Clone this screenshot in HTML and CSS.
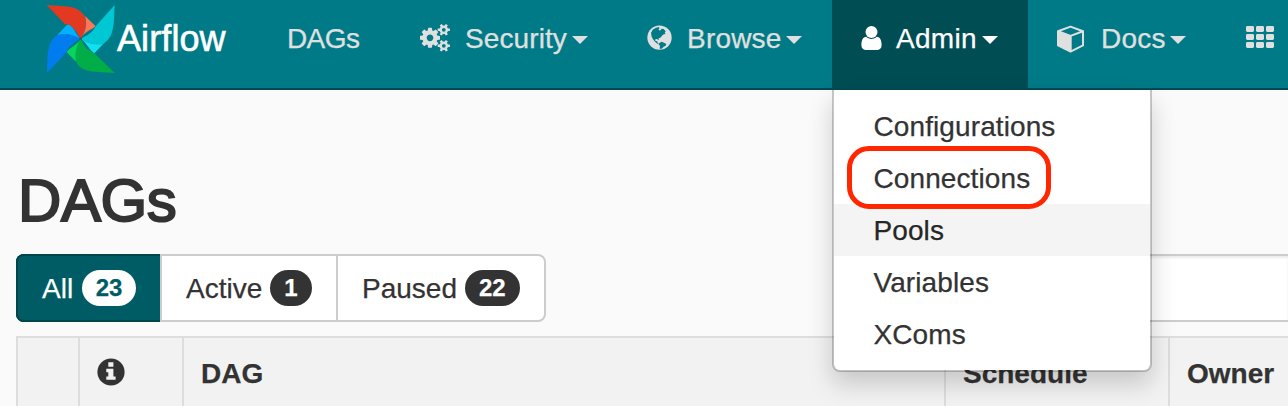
FILE: index.html
```html
<!DOCTYPE html>
<html lang="en">
<head>
<meta charset="utf-8">
<title>Airflow - DAGs</title>
<link rel="stylesheet" href="styles.css">
</head>
<body>
<header class="navbar">
  <a class="brand">
    <svg class="logo" width="80" height="80" viewBox="0 0 240 240">
      <path fill="#e43921" d="M20 15 C50 18 80 17 101 23 C117 28 129 38 135 50 C142 75 133 98 122 116 C112 101 104 83 86 74 L75 73 Z"/>
      <path fill="#ff7557" d="M135 48 L167 79 C155 90 134 94 122 116 C135 98 143 75 135 48 Z"/>
      <path fill="#00c7d4" d="M224 15 C222 45 223 74 216 97 C211 114 201 124 190 131 C165 137 141 129 122 116 C140 108 158 98 167 79 Z"/>
      <path fill="#11e1ee" d="M190 131 L163 160 C149 151 142 130 122 116 C141 129 165 137 190 131 Z"/>
      <path fill="#00ad46" d="M224 219 C192 216 162 218 136 210 C121 204 112 195 109 185 C103 160 110 138 122 116 C129 135 142 151 163 160 Z"/>
      <path fill="#04d659" d="M109 186 L80 156 C90 141 110 137 122 116 C110 138 103 160 109 186 Z"/>
      <path fill="#017cee" d="M21 219 C23 187 20 160 29 135 C35 118 43 109 54 104 C78 97 102 105 122 116 C105 124 87 136 80 156 Z"/>
      <path fill="#00b2ff" d="M52 105 L80 76 Q87 72 93 79 C104 87 107 105 122 116 C102 105 78 97 52 105 Z"/>
      <circle cx="122" cy="116" r="4" fill="#51504f"/>
    </svg>
    <span>Airflow</span>
  </a>
  <ul class="nav">
    <li class="item dags">DAGs</li>
    <li class="item security">
      <svg class="icon" width="30" height="30" viewBox="0 0 30 30">
        <path transform="translate(0 3.8) scale(.01302) translate(0 -128)" d="M1024 896q0-106-75-181t-181-75-181 75-75 181 75 181 181 75 181-75 75-181zm512-109v222q0 12-8 23t-20 13l-185 28q-19 54-39 91 35 50 107 138 10 12 10 25t-9 23q-27 37-99 108t-94 71q-12 0-26-9l-138-108q-44 23-91 38-16 136-29 186-7 28-36 28h-222q-14 0-24.5-8.5t-11.5-21.5l-28-184q-49-16-90-37l-141 107q-10 9-25 9-14 0-25-11-126-114-165-168-7-10-7-23 0-12 8-23 15-21 51-66.5t54-70.5q-27-50-41-99l-183-27q-13-2-21-12.5t-8-23.5v-222q0-12 8-23t19-13l186-28q14-46 39-92-40-57-107-138-10-12-10-24 0-10 9-23 26-36 98.5-107.5t94.5-71.5q13 0 26 10l138 107q44-23 91-38 16-136 29-186 7-28 36-28h222q14 0 24.5 8.5t11.5 21.5l28 184q49 16 90 37l142-107q9-9 24-9 13 0 25 10 129 119 165 170 7 8 7 22 0 12-8 23-15 21-51 66.5t-54 70.5q26 50 41 98l183 28q13 2 21 12.5t8 23.5z"/>
        <g fill="none" stroke="currentColor">
          <circle cx="23.8" cy="5.8" r="3.1" stroke-width="2.4"/>
          <path stroke-width="2.5" d="M27.4 5.8H29.9M20.2 5.8H17.7M25.6 2.7 26.8 .6M22 2.7 20.8 .6M25.6 8.9 26.8 11M22 8.9 20.8 11"/>
          <circle cx="23.8" cy="21.8" r="3.1" stroke-width="2.4"/>
          <path stroke-width="2.5" d="M27.4 21.8H29.9M20.2 21.8H17.7M25.6 18.7 26.8 16.6M22 18.7 20.8 16.6M25.6 24.9 26.8 27M22 24.9 20.8 27"/>
        </g>
      </svg>
      <span>Security</span><i class="caret"></i>
    </li>
    <li class="item browse">
      <svg class="icon" width="25" height="26" viewBox="0 0 75 78">
        <circle cx="37.5" cy="38" r="36.5"/>
        <path class="cut" d="M17 14 Q25 8 35 6 L38 10 L34 13 L39 17 L44 11 L50 12 L56 19 L53 23 L56 27 L50 28 L45 32 L40 38 L35 40 L35 46 L30 42 L25 43 L25 48 L31 49 L32 54 L37 56 L31 56 L24 50 L18 43 L14 35 L12 24 Z"/>
        <path class="cut" d="M37 54 L44 50 L51 53 L58 57 L56 62 L50 65 L44 71 L38 71 L39 63 L35 58 Z"/>
      </svg>
      <span>Browse</span><i class="caret"></i>
    </li>
    <li class="item admin">
      <svg class="icon" width="21" height="26" viewBox="0 0 21 26">
        <path d="M5.2 11.8C6.6 13.2 8.5 13.9 10.5 13.9S14.4 13.2 15.8 11.8C19.2 11.9 20.6 15.8 20.6 20.3C20.6 23 18.9 25 16.6 25H4.4C2.1 25 .4 23 .4 20.3C.4 15.8 1.8 11.9 5.2 11.8Z"/>
        <circle cx="10.5" cy="7" r="6"/>
      </svg>
      <span>Admin</span><i class="caret"></i>
      <div class="menu">
        <a>Configurations</a>
        <a class="marked">Connections</a>
        <a class="hovered">Pools</a>
        <a>Variables</a>
        <a>XComs</a>
      </div>
    </li>
    <li class="item docs">
      <svg class="icon" width="27" height="28" viewBox="0 0 27 28">
        <path d="M1 6.5 13.5 11V26.5L1 20.5Z"/>
        <path fill="none" stroke="currentColor" stroke-width="2" stroke-linejoin="round" d="M13.5 1.6 26 6.2V20.4L13.5 26.6 1 20.4V6.2ZM1 6.2 13.5 10.9 26 6.2M13.7 10.9V26.4"/>
      </svg>
      <span>Docs</span><i class="caret"></i>
    </li>
    <li class="item apps">
      <svg class="icon" width="28" height="22" viewBox="0 0 28 22">
        <g>
          <rect width="8" height="6" rx="1.4"/><rect x="10" width="8" height="6" rx="1.4"/><rect x="20" width="8" height="6" rx="1.4"/>
          <rect y="8" width="8" height="6" rx="1.4"/><rect x="10" y="8" width="8" height="6" rx="1.4"/><rect x="20" y="8" width="8" height="6" rx="1.4"/>
          <rect y="16" width="8" height="6" rx="1.4"/><rect x="10" y="16" width="8" height="6" rx="1.4"/><rect x="20" y="16" width="8" height="6" rx="1.4"/>
        </g>
      </svg>
    </li>
  </ul>
</header>
<main class="page">
  <h2 class="title">DAGs</h2>
  <div class="toolbar">
    <div class="filters">
      <a class="filter all"><span>All</span><span class="badge">23</span></a>
      <a class="filter active"><span>Active</span><span class="badge">1</span></a>
      <a class="filter paused"><span>Paused</span><span class="badge">22</span></a>
    </div>
    <div class="search"></div>
  </div>
  <div class="table">
    <div class="cell"></div>
    <div class="cell">
      <svg class="info" width="28" height="28" viewBox="0 0 28 28">
        <circle cx="14" cy="14" r="13.6"/>
        <path d="M11.3 4.2H16.4V8.8H11.3ZM9.3 10.8H16.4V18.4H18.6V21.8H9.3V18.4H11.3V14.2H9.3Z"/>
      </svg>
    </div>
    <div class="cell">DAG</div>
    <div class="cell">Schedule</div>
    <div class="cell">Owner</div>
  </div>
</main>
</body>
</html>
```
FILE: styles.css
```css
*, *::after { box-sizing: border-box; }
html, body { height: 406px; overflow: hidden; }
body {
  margin: 0;
  background: #fafafa;
  color: #333;
  font: 28px/40px "Liberation Sans", Arial, sans-serif;
  -webkit-text-stroke: .25px currentColor;
}
.navbar {
  display: flex;
  height: 90px;
  background: #007a87;
  border-bottom: 2px solid #004a52;
  color: #e0e0e0;
}
.brand {
  display: flex;
  width: 257px;
  padding-left: 40px;
  color: #fff;
  font-size: 36px;
}
.brand span { margin-left: -3px; padding-top: 19px; letter-spacing: .1px; -webkit-text-stroke: .6px #fff; }
.nav { display: flex; margin: 0; padding: 0; list-style: none; }
.item {
  position: relative;
  display: flex;
  flex: none;
  height: 88px;
  padding: 19px 0 0 30px;
  white-space: nowrap;
}
.icon { flex: none; fill: currentColor; margin-top: 6px; }
.cut { fill: #007a87; }
.caret {
  width: 0;
  height: 0;
  margin: 17px 0 0 6px;
  border: 8px solid transparent;
  border-top-color: currentColor;
  border-bottom: 0;
}
.dags { width: 133px; letter-spacing: -.6px; }
.security { width: 227px; }
.security .icon { margin-top: 5px; }
.security span { margin-left: 15px; letter-spacing: .1px; }
.security .caret { margin-left: 5px; }
.browse { width: 215px; }
.browse span { margin-left: 15px; letter-spacing: .2px; }
.browse .caret { margin-left: 4px; }
.admin { width: 196px; padding-left: 29px; background: #004d54; color: #fff; }
.admin > span { margin-left: 14px; letter-spacing: .3px; }
.admin > .caret { margin-left: 5px; }
.docs { width: 188px; padding-left: 29px; }
.docs span { margin-left: 17px; letter-spacing: .2px; }
.docs .caret { margin-left: 4px; }
.apps { width: 72px; }
.apps .icon { margin-top: 7px; }
.menu {
  position: absolute;
  z-index: 2;
  top: 90px;
  left: 0;
  width: 320px;
  height: 282px;
  padding-top: 10px;
  background: #fff;
  background-clip: padding-box;
  border: 2px solid rgba(0, 0, 0, .2);
  border-top: 0;
  border-radius: 0 0 8px 8px;
  box-shadow: 0 12px 24px rgba(0, 0, 0, .175);
  color: #333;
}
.menu a { display: block; height: 52px; padding: 7px 0 0 39.5px; position: relative; letter-spacing: .1px; }
.menu .hovered { background: #f4f4f4; color: #262626; }
.menu .marked { z-index: 1; }
.marked::after {
  content: "";
  position: absolute;
  left: 13px;
  top: -6px;
  width: 204px;
  height: 63px;
  border: 5px solid #ff2600;
  border-radius: 22px;
}
.page { padding: 0 0 0 16px; }
.title {
  height: 164px;
  margin: 0;
  padding: 78px 0 0 2px;
  font-size: 60px;
  font-weight: 400;
  line-height: 66px;
  -webkit-text-stroke: 2px #333;
  letter-spacing: -.4px;
}
.toolbar { display: flex; height: 82px; }
.filters {
  display: flex;
  width: 530px;
  height: 68px;
  background: #fff;
  border: 2px solid #ccc;
  border-radius: 8px;
}
.filter { display: flex; align-items: center; height: 64px; padding-left: 24px; border-right: 2px solid #ccc; }
.filter span:first-child { padding-top: 2px; }
.all {
  width: 146px;
  height: 68px;
  margin: -2px 0 0 -2px;
  background: #005c64;
  color: #fff;
  box-shadow: inset 2px 0 #00444c, inset 0 2px #00444c, inset 0 -2px #00444c;
  border-radius: 8px 0 0 8px;
  padding-left: 26px;
  border-right: 2px solid #ccc;
}
.active { width: 176px; }
.paused { border: 0; }
.badge {
  height: 36px;
  margin-left: 8px;
  padding: 0 14px;
  border-radius: 20px;
  background: #333;
  color: #fff;
  font-size: 24px;
  font-weight: 700;
  line-height: 36px;
}
.all .badge { margin-left: 9px; padding: 0 13.6px; background: #fff; color: #005c64; }
.search {
  flex: 1;
  height: 68px;
  margin-left: 300px;
  background: #fff;
  border: 2px solid #ccc;
  border-right: 0;
  box-shadow: inset 0 2px 2px rgba(0, 0, 0, .075);
}
.table {
  display: grid;
  grid-template-columns: 62px 104px 762px 224px 1fr;
  height: 70px;
  border-top: 2px solid #ddd;
  background: #f2f2f2;
  font-weight: 700;
}
.cell { padding: 16px 0 0 17px; border-left: 2px solid #ddd; }
.info { display: block; margin-top: 4px; fill: #333; }
.info path { fill: #f2f2f2; }
```
